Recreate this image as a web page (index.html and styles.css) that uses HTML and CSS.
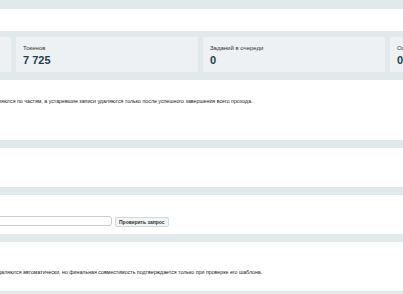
FILE: index.html
```html
<!DOCTYPE html>
<html lang="ru">
<head>
    <meta charset="UTF-8">
    <meta name="viewport" content="width=device-width, initial-scale=1.0">
    <title>Индекс</title>
    <link rel="stylesheet" href="styles.css">
</head>
<body>
    <div class="page">
        <div class="panel top"></div>
        <div class="stats">
            <div class="stat">
                <div class="label">Записей</div>
                <div class="value">1 204</div>
            </div>
            <div class="stat">
                <div class="label">Токенов</div>
                <div class="value">7 725</div>
            </div>
            <div class="stat">
                <div class="label">Заданий в очереди</div>
                <div class="value">0</div>
            </div>
            <div class="stat">
                <div class="label">Ошибок</div>
                <div class="value">0</div>
            </div>
        </div>
        <div class="panel notice">
            <p>ляются по частям, а устаревшие записи удаляются только после успешного завершения всего прохода.</p>
        </div>
        <div class="panel empty"></div>
        <div class="panel check">
            <input type="text" class="query">
            <button class="btn">Проверить запрос</button>
        </div>
        <div class="panel notice last">
            <p>даляются автоматически, но финальная совместимость подтверждается только при проверке его шаблона.</p>
        </div>
    </div>
</body>
</html>
```

FILE: styles.css
```css
body {
    margin: 0;
    overflow: hidden;
    background: #e2e9ea;
    color: #222;
    font-family: "Liberation Sans", Arial, sans-serif;
}
.page {
    display: flex;
    flex-direction: column;
    padding-top: 9px;
}
.panel {
    background: #fff;
    margin-bottom: 8px;
}
.panel.top {
    height: 22px;
    margin-bottom: 0;
}
.stats {
    display: grid;
    grid-template-columns: repeat(4, 182px);
    gap: 5px;
    margin-left: -171px;
    padding: 6px 0 8px;
}
.stat {
    background: #edf1f3;
    height: 35px;
    box-sizing: border-box;
    padding: 7px 7px 0;
}
.stat .label {
    font-size: 6px;
    color: #333;
    line-height: 8px;
}
.stat .value {
    font-size: 11px;
    font-weight: bold;
    color: #1d3d50;
    line-height: 14px;
    margin-top: 1px;
}
.panel.notice {
    height: 60px;
    box-sizing: border-box;
    padding-top: 18px;
}
.panel.notice p {
    margin: 0 0 0 -2px;
    font-size: 5.25px;
    line-height: 7px;
    white-space: nowrap;
}
.panel.empty {
    height: 39px;
}
.panel.check {
    height: 39px;
    box-sizing: border-box;
    padding-top: 21px;
    display: flex;
    align-items: flex-start;
    gap: 3px;
}
.query {
    margin: 0 0 0 -20px;
    width: 132px;
    height: 10px;
    box-sizing: border-box;
    border: 1px solid #c6ccd0;
    border-radius: 3px;
    padding: 0;
}
.btn {
    margin-top: 1px;
    height: 10px;
    padding: 0 3px;
    font-family: "Liberation Sans", Arial, sans-serif;
    font-size: 5px;
    font-weight: bold;
    color: #333;
    background: #f2f4f5;
    border: 1px solid #d3d8db;
    border-radius: 2px;
}
.panel.last {
    height: 49px;
    padding-top: 27px;
    margin-bottom: 3px;
}
```
